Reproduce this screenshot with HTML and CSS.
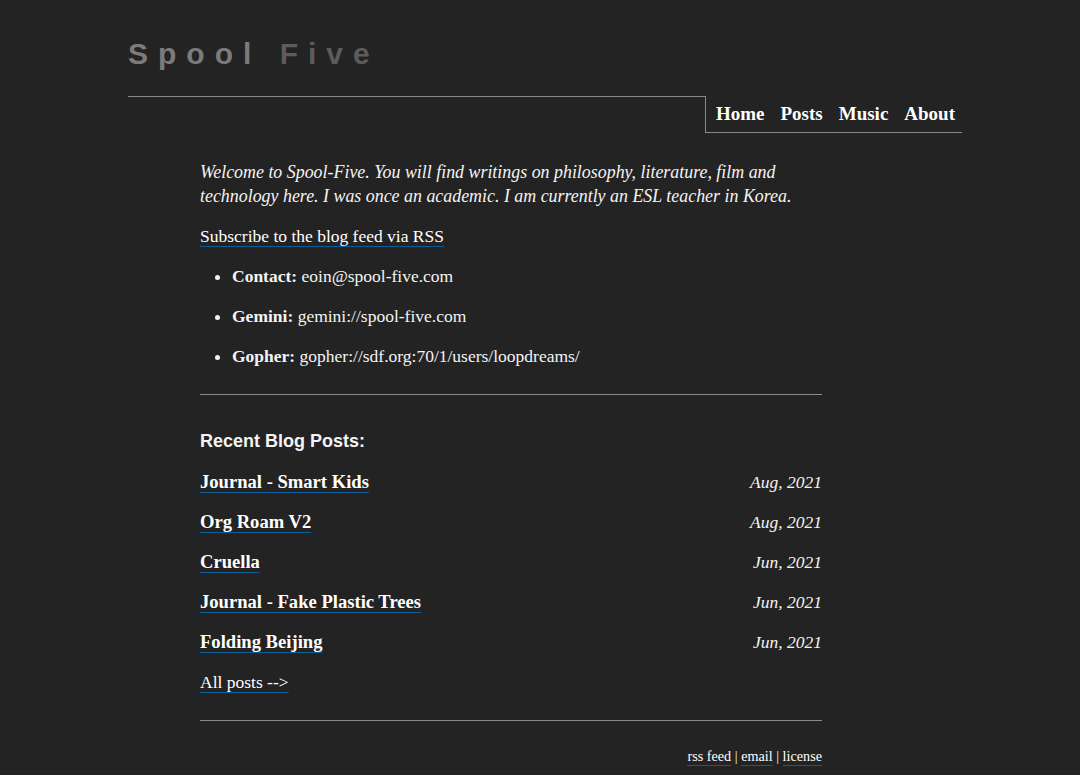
FILE: index.html
```html
<!DOCTYPE html>
<html lang="en">
<head>
  <meta charset="UTF-8" />
  <meta name="viewport" content="width=device-width, initial-scale=1.0"/>
  <title>Spool Five</title>
  <link rel="stylesheet" href="styles.css">
</head>
<body>
  <div class="page">
    <header class="site-header">
      <div class="brand"><span class="brand-first">Spool</span> <span class="brand-second">Five</span></div>
      <div class="bar">
        <div class="rule"></div>
        <nav class="nav">
          <a href="#">Home</a>
          <a href="#">Posts</a>
          <a href="#">Music</a>
          <a href="#">About</a>
        </nav>
      </div>
    </header>

    <main class="content">
      <p class="intro">Welcome to Spool-Five. You will find writings on philosophy, literature, film and technology here. I was once an academic. I am currently an ESL teacher in Korea.</p>
      <p class="subscribe"><a class="link" href="#">Subscribe to the blog feed via RSS</a></p>

      <ul class="contacts">
        <li><strong>Contact:</strong> eoin@spool-five.com</li>
        <li><strong>Gemini:</strong> gemini://spool-five.com</li>
        <li><strong>Gopher:</strong> gopher://sdf.org:70/1/users/loopdreams/</li>
      </ul>

      <hr class="divider">

      <h2 class="section-title">Recent Blog Posts:</h2>
      <ul class="posts">
        <li><a class="link post-title" href="#">Journal - Smart Kids</a><span class="date">Aug, 2021</span></li>
        <li><a class="link post-title" href="#">Org Roam V2</a><span class="date">Aug, 2021</span></li>
        <li><a class="link post-title" href="#">Cruella</a><span class="date">Jun, 2021</span></li>
        <li><a class="link post-title" href="#">Journal - Fake Plastic Trees</a><span class="date">Jun, 2021</span></li>
        <li><a class="link post-title" href="#">Folding Beijing</a><span class="date">Jun, 2021</span></li>
      </ul>
      <p class="all-posts"><a class="link" href="#">All posts --&gt;</a></p>

      <hr class="divider divider-bottom">

      <footer class="footer">
        <a class="link" href="#">rss feed</a> | <a class="link" href="#">email</a> | <a class="link" href="#">license</a>
      </footer>
    </main>
  </div>
</body>
</html>
```

FILE: styles.css
```css
:root {
  --bg: #232323;
  --text: #f4f4f4;
  --rule: #8a8a8a;
  --link-line: #0d5e96;
  --brand-a: #7b7b7b;
  --brand-b: #5c5c5c;
}

* {
  box-sizing: border-box;
  margin: 0;
  padding: 0;
}

html, body {
  background: var(--bg);
  color: var(--text);
  font-family: "Liberation Serif", Georgia, serif;
  font-size: 17.5px;
  line-height: 24px;
}

.page {
  padding: 39px 0 0 128px;
  width: 962px;
}

/* header */

.brand {
  font-family: "Liberation Sans", Arial, sans-serif;
  font-weight: bold;
  font-size: 30px;
  line-height: 30px;
  letter-spacing: 10px;
}

.brand-first {
  color: var(--brand-a);
}

.brand-second {
  color: var(--brand-b);
}

.bar {
  display: flex;
  margin-top: 27px;
}

.rule {
  flex: 1;
  border-top: 1px solid var(--rule);
}

.nav {
  display: flex;
  align-items: center;
  gap: 16px;
  height: 37px;
  padding: 0 7px 0 10px;
  border-left: 1px solid var(--rule);
  border-bottom: 1px solid var(--rule);
}

.nav a {
  color: #fff;
  font-weight: bold;
  font-size: 19px;
  text-decoration: none;
}

/* content */

.content {
  width: 622px;
  margin: 27px 0 0 72px;
}

.intro {
  font-style: italic;
  font-size: 17.9px;
}

.subscribe {
  margin-top: 16px;
}

.link {
  color: #fff;
  text-decoration: underline;
  text-decoration-color: var(--link-line);
  text-decoration-thickness: 1px;
  text-underline-offset: 4px;
  text-decoration-skip-ink: none;
}

.contacts {
  margin: 16px 0 0 32px;
}

.contacts li {
  margin-bottom: 16px;
}

.divider {
  border: none;
  border-top: 1px solid var(--rule);
  margin-top: 26px;
}

.section-title {
  font-family: "Liberation Sans", Arial, sans-serif;
  font-size: 18px;
  line-height: 24px;
  margin-top: 34px;
}

.posts {
  list-style: none;
  margin-top: 17px;
}

.posts li {
  display: flex;
  justify-content: space-between;
  align-items: baseline;
  height: 24px;
  margin-bottom: 16px;
}

.post-title {
  font-weight: bold;
  font-size: 18.6px;
  line-height: 23px;
}

.date {
  font-style: italic;
}

.divider-bottom {
  margin-top: 26px;
}

.footer {
  margin-top: 25px;
  text-align: right;
  font-size: 14.2px;
  line-height: 20px;
}
```
